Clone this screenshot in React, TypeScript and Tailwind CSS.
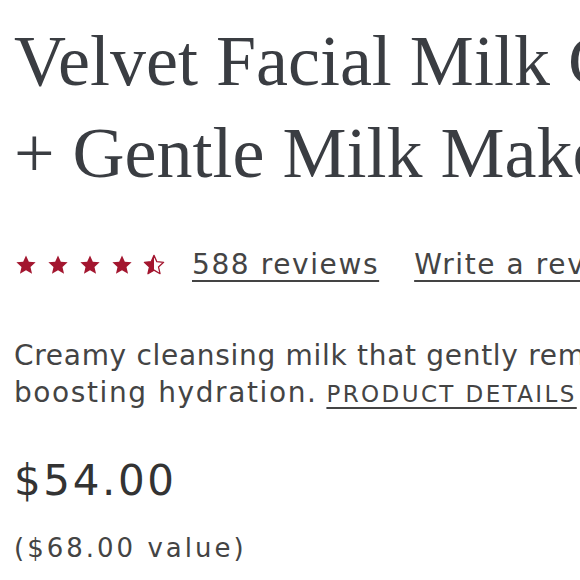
import React from 'react';

const STAR = 'M12 1.5l3.1 6.9 7.4.7-5.6 5 1.7 7.4L12 17.6l-6.6 3.9 1.7-7.4-5.6-5 7.4-.7z';

const Star: React.FC<{ half?: boolean }> = ({ half }) => (
  <svg viewBox="0 0 24 24" className="w-[22px] h-[22px]">
    {half ? (
      <>
        <defs>
          <clipPath id="left-half">
            <rect x="0" y="0" width="12" height="24" />
          </clipPath>
        </defs>
        <path d={STAR} fill="none" stroke="#a3162f" strokeWidth="1.4" strokeLinejoin="round" />
        <path d={STAR} fill="#a3162f" clipPath="url(#left-half)" />
      </>
    ) : (
      <path d={STAR} fill="#a3162f" />
    )}
  </svg>
);

const App: React.FC = () => {
  return (
    <div className="w-[580px] h-[580px] overflow-hidden bg-white pl-[14px] pt-[15px]">
      <h1
        className="whitespace-nowrap text-[72px] leading-[92px] text-[#3a3d42]"
        style={{ fontFamily: '"Liberation Serif", serif' }}
      >
        Velvet Facial Milk Cleanser
        <br />+ Gentle Milk Makeup Remover
      </h1>

      <div
        className="text-[#444] whitespace-nowrap"
        style={{ fontFamily: '"DejaVu Sans", sans-serif' }}
      >
        <div className="mt-[48px] flex items-center h-[36px]">
          <div className="flex items-center gap-[10px] ml-[1px]">
            <Star />
            <Star />
            <Star />
            <Star />
            <Star half />
          </div>
          <a className="ml-[27px] text-[28px] leading-[36px] tracking-[1.6px] underline underline-offset-[6px] decoration-[2px]">
            588 reviews
          </a>
          <a className="ml-[35px] text-[28px] leading-[36px] tracking-[1.6px] underline underline-offset-[6px] decoration-[2px]">
            Write a review
          </a>
        </div>

        <p className="mt-[54px] text-[28px] leading-[37px]">
          <span className="tracking-[0.7px]">Creamy cleansing milk that gently removes makeup</span>
          <br />
          <span className="tracking-[1.6px]">boosting hydration.</span>{' '}
          <a className="text-[23px] tracking-[2.4px] uppercase underline underline-offset-[5px] decoration-[2px]">
            Product details
          </a>
        </p>

        <div className="mt-[44px] text-[42px] leading-[48px] font-medium tracking-[2.6px] text-[#333]">
          $54.00
        </div>
        <div className="mt-[26px] text-[26px] leading-[34px] tracking-[3px]">($68.00 value)</div>
      </div>
    </div>
  );
};

export default App;
